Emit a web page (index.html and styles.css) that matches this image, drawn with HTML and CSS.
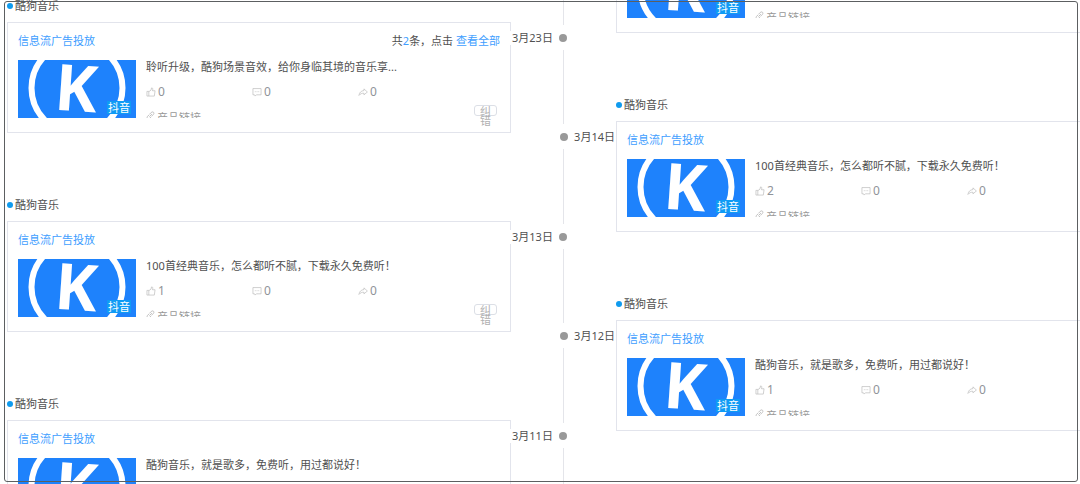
FILE: index.html
```html
<!DOCTYPE html>
<html lang="zh-CN">
<head>
    <meta charset="UTF-8">
    <meta name="viewport" content="width=device-width, initial-scale=1.0">
    <title>酷狗音乐 投放时间轴</title>
    <link rel="stylesheet" href="styles.css">
</head>
<body>
    <!-- shared icons -->
    <svg class="sprite" aria-hidden="true">
        <symbol id="logo" viewBox="0 0 118 58">
            <rect width="118" height="58" fill="#1e82fc"/>
            <circle cx="59" cy="28" r="45.5" fill="none" stroke="#fff" stroke-width="6"/>
            <text x="37" y="51" transform="rotate(4 59 28)" class="logo-letter">K</text>
        </symbol>
        <symbol id="like" viewBox="0 0 16 16">
            <path d="M1.5 7h3v7.5h-3zM4.500 7.500L8 5l.8-3.500c1.500-.3 2.200.8 2 2.200L10.300 6h4.200l-1.200 8.500H4.500" fill="none" stroke="currentColor"/>
        </symbol>
        <symbol id="comment" viewBox="0 0 16 16">
            <path d="M1.500 2.500h13v10H7l-2 2-1-2H1.500zM4.500 7.500h1.500M7.300 7.500h1.500M10 7.500h1.500" fill="none" stroke="currentColor"/>
        </symbol>
        <symbol id="share" viewBox="0 0 16 16">
            <path d="M9.500 3l5.500 5-5.500 4.500V10C6 9.800 3.500 11 1.500 13.500 2 9 5 6 9.500 5.700z" fill="none" stroke="currentColor"/>
        </symbol>
        <symbol id="link" viewBox="0 0 16 16">
            <path d="M6 10l4.500-4.500M6.500 5.500l3-3c3-2.500 6 .8 3.700 3.500l-3 3M9.500 10L6.500 13c-3 2.500-6-.8-3.700-3.500L5.800 6.500" fill="none" stroke="currentColor" stroke-width="1.500"/>
        </symbol>
    </svg>

    <main class="timeline">
        <section class="side side-left">
            <article class="entry">
                <div class="content">
                    <h2 class="brand">酷狗音乐</h2>
                    <div class="card">
                        <div class="card-head">
                            <a href="#" class="blue">信息流广告投放</a>
                            <span>共<b>2</b>条，点击 <a href="#" class="blue">查看全部</a></span>
                        </div>
                        <div class="card-body">
                            <div class="thumb"><svg><use href="#logo"/></svg><span class="badge">抖音</span></div>
                            <div class="info">
                                <p>聆听升级，酷狗场景音效，给你身临其境的音乐享...</p>
                                <ul class="stats">
                                    <li><svg><use href="#like"/></svg>0</li>
                                    <li><svg><use href="#comment"/></svg>0</li>
                                    <li><svg><use href="#share"/></svg>0</li>
                                </ul>
                                <a href="#" class="product"><svg><use href="#link"/></svg>产品链接</a>
                            </div>
                            <button type="button" class="fix">纠错</button>
                        </div>
                    </div>
                </div>
                <div class="marker"><time>3月23日</time><span class="node"></span></div>
            </article>

            <article class="entry">
                <div class="content">
                    <h2 class="brand">酷狗音乐</h2>
                    <div class="card">
                        <div class="card-head"><a href="#" class="blue">信息流广告投放</a></div>
                        <div class="card-body">
                            <div class="thumb"><svg><use href="#logo"/></svg><span class="badge">抖音</span></div>
                            <div class="info">
                                <p>100首经典音乐，怎么都听不腻，下载永久免费听！</p>
                                <ul class="stats">
                                    <li><svg><use href="#like"/></svg>1</li>
                                    <li><svg><use href="#comment"/></svg>0</li>
                                    <li><svg><use href="#share"/></svg>0</li>
                                </ul>
                                <a href="#" class="product"><svg><use href="#link"/></svg>产品链接</a>
                            </div>
                            <button type="button" class="fix">纠错</button>
                        </div>
                    </div>
                </div>
                <div class="marker"><time>3月13日</time><span class="node"></span></div>
            </article>

            <article class="entry">
                <div class="content">
                    <h2 class="brand">酷狗音乐</h2>
                    <div class="card">
                        <div class="card-head"><a href="#" class="blue">信息流广告投放</a></div>
                        <div class="card-body">
                            <div class="thumb"><svg><use href="#logo"/></svg></div>
                            <div class="info">
                                <p>酷狗音乐，就是歌多，免费听，用过都说好！</p>
                            </div>
                        </div>
                    </div>
                </div>
                <div class="marker"><time>3月11日</time><span class="node"></span></div>
            </article>
        </section>

        <div class="axis"></div>

        <section class="side side-right">
            <article class="entry">
                <div class="content">
                    <div class="brand-space"></div>
                    <div class="card">
                        <div class="card-head"></div>
                        <div class="card-body">
                            <div class="thumb"><svg><use href="#logo"/></svg><span class="badge">抖音</span></div>
                            <div class="info">
                                <p></p>
                                <ul class="stats"></ul>
                                <a href="#" class="product"><svg><use href="#link"/></svg>产品链接</a>
                            </div>
                        </div>
                    </div>
                </div>
                <div class="marker"></div>
            </article>

            <article class="entry">
                <div class="content">
                    <h2 class="brand">酷狗音乐</h2>
                    <div class="card">
                        <div class="card-head"><a href="#" class="blue">信息流广告投放</a></div>
                        <div class="card-body">
                            <div class="thumb"><svg><use href="#logo"/></svg><span class="badge">抖音</span></div>
                            <div class="info">
                                <p>100首经典音乐，怎么都听不腻，下载永久免费听！</p>
                                <ul class="stats">
                                    <li><svg><use href="#like"/></svg>2</li>
                                    <li><svg><use href="#comment"/></svg>0</li>
                                    <li><svg><use href="#share"/></svg>0</li>
                                </ul>
                                <a href="#" class="product"><svg><use href="#link"/></svg>产品链接</a>
                            </div>
                        </div>
                    </div>
                </div>
                <div class="marker"><time>3月14日</time><span class="node"></span></div>
            </article>

            <article class="entry">
                <div class="content">
                    <h2 class="brand">酷狗音乐</h2>
                    <div class="card">
                        <div class="card-head"><a href="#" class="blue">信息流广告投放</a></div>
                        <div class="card-body">
                            <div class="thumb"><svg><use href="#logo"/></svg><span class="badge">抖音</span></div>
                            <div class="info">
                                <p>酷狗音乐，就是歌多，免费听，用过都说好！</p>
                                <ul class="stats">
                                    <li><svg><use href="#like"/></svg>1</li>
                                    <li><svg><use href="#comment"/></svg>0</li>
                                    <li><svg><use href="#share"/></svg>0</li>
                                </ul>
                                <a href="#" class="product"><svg><use href="#link"/></svg>产品链接</a>
                            </div>
                        </div>
                    </div>
                </div>
                <div class="marker"><time>3月12日</time><span class="node"></span></div>
            </article>
        </section>
    </main>
    <div class="frame"></div>
</body>
</html>
```

FILE: styles.css
```css
* {
    margin: 0;
    padding: 0;
    box-sizing: border-box;
}

body {
    height: 100vh;
    overflow: hidden;
    background: #fff;
    color: #505050;
    font-family: "Noto Sans", "Noto Sans CJK SC", sans-serif;
    font-size: 11px;
    line-height: 14px;
}

a {
    color: inherit;
    text-decoration: none;
}

ul {
    list-style: none;
}

.sprite {
    position: absolute;
    width: 0;
    height: 0;
}

.logo-letter {
    fill: #fff;
    font-family: "Open Sans", sans-serif;
    font-size: 64px;
    font-weight: 700;
}

/* the border drawn over the scrolled list */
.frame {
    position: fixed;
    inset: 1px 2px 2px 4px;
    border: 1px solid #5c5f61;
    border-radius: 3px;
    pointer-events: none;
}

/* right side runs past the window edge */
.timeline {
    display: grid;
    grid-template-columns: 1fr 1px 1fr;
    height: 100%;
    margin-left: 7px;
    margin-right: -40px;
}

.axis {
    background: #e4e5ea;
}

.side-left {
    margin-top: -4px;
}

.side-right {
    margin-top: -104px;
}

.entry {
    display: flex;
    margin-bottom: 62px;
}

.side-right .entry {
    flex-direction: row-reverse;
}

.content {
    flex: 1;
}

.brand,
.brand-space {
    display: flex;
    align-items: center;
    gap: 2px;
    height: 20px;
    margin-bottom: 6px;
    font-size: 11px;
    font-weight: normal;
}

.brand::before {
    content: "";
    width: 6px;
    height: 6px;
    border-radius: 50%;
    background: #0f9bee;
}

.card {
    padding: 9px 10px 14px;
    border: 1px solid #e2e4ec;
}

.card-head {
    display: flex;
    justify-content: space-between;
    height: 18px;
    margin-bottom: 10px;
    line-height: 18px;
}

.blue,
.card-head b {
    color: #409eff;
    font-weight: normal;
}

.card-body {
    display: flex;
    gap: 10px;
    height: 58px;
}

.thumb {
    position: relative;
    width: 118px;
}

.thumb svg {
    display: block;
    width: 118px;
    height: 58px;
}

.badge {
    position: absolute;
    right: 5px;
    bottom: 4px;
    padding: 0 1px;
    background: #0f9bf5;
    color: #fff;
    line-height: 13px;
}

.info {
    flex: 1;
    overflow: hidden;
    margin-right: 36px;
}

.info p {
    height: 14px;
    white-space: nowrap;
}

.stats {
    display: grid;
    grid-template-columns: repeat(3, 1fr);
    height: 14px;
    margin: 11px 0 12px;
    color: #909399;
    font-size: 12px;
}

.stats li {
    display: flex;
    align-items: center;
    gap: 2px;
}

.stats svg {
    width: 10px;
    height: 10px;
    color: #b5b5b5;
}

.product {
    display: flex;
    gap: 2px;
    color: #999;
}

.product svg {
    width: 9px;
    height: 9px;
    color: #b5b5b5;
}

.fix {
    width: 23px;
    height: 11px;
    margin: 45px 3px 0 -36px;
    padding: 0 5px;
    border: 1px solid #dcdfe6;
    border-radius: 3px;
    background: none;
    color: #b0b0b0;
    font: inherit;
    line-height: 10px;
}

.marker {
    display: flex;
    align-items: center;
    justify-content: space-between;
    width: 52px;
    height: 25px;
    margin-top: 29px;
}

.side-right .marker {
    flex-direction: row-reverse;
}

.marker time {
    margin: 0 -2px;
    padding: 0 3px;
    background: #fff;
    white-space: nowrap;
}

/* white strip that breaks the axis around the dot */
.node {
    position: relative;
    z-index: 1;
    display: flex;
    align-items: center;
    height: 25px;
    margin: 0 -4px;
    background: #fff;
}

.node::before {
    content: "";
    width: 8px;
    height: 8px;
    border-radius: 50%;
    background: #999;
}
```
